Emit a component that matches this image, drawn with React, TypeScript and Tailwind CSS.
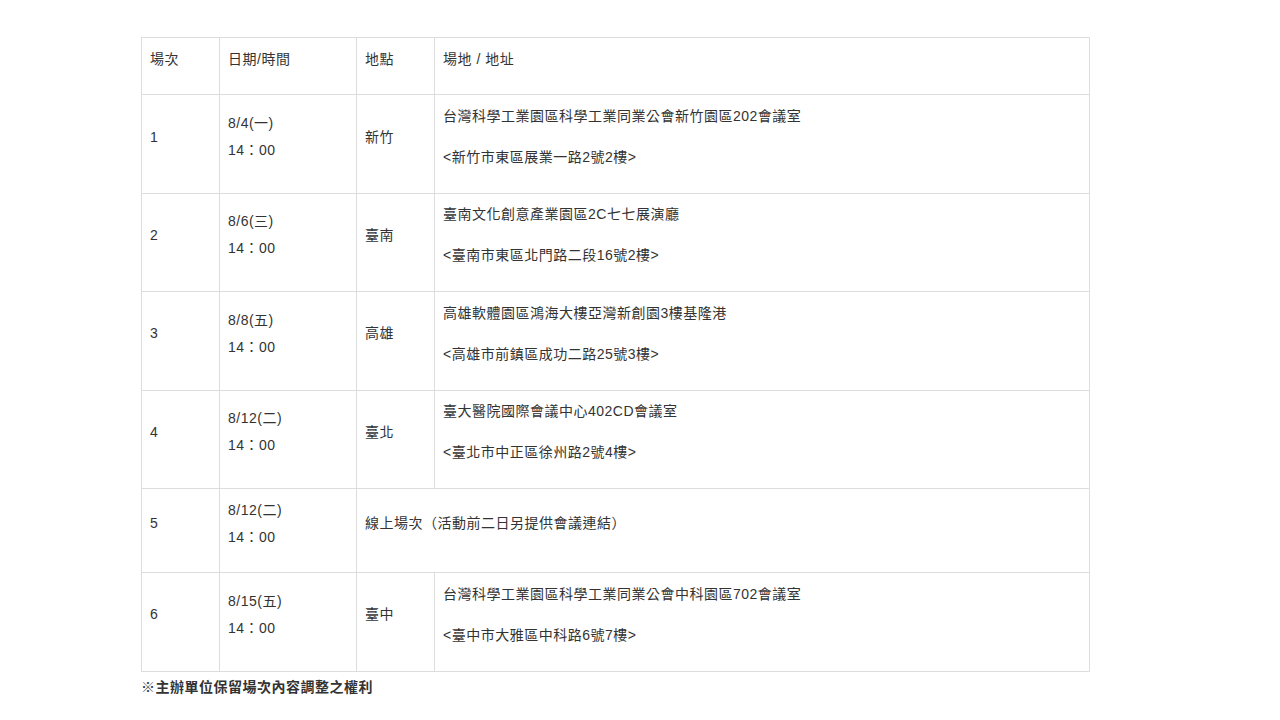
const rows = [
  { no: '1', date: '8/4(一)', place: '新竹', venue: '台灣科學工業園區科學工業同業公會新竹園區202會議室', addr: '<新竹市東區展業一路2號2樓>' },
  { no: '2', date: '8/6(三)', place: '臺南', venue: '臺南文化創意產業園區2C七七展演廳', addr: '<臺南市東區北門路二段16號2樓>' },
  { no: '3', date: '8/8(五)', place: '高雄', venue: '高雄軟體園區鴻海大樓亞灣新創園3樓基隆港', addr: '<高雄市前鎮區成功二路25號3樓>' },
  { no: '4', date: '8/12(二)', place: '臺北', venue: '臺大醫院國際會議中心402CD會議室', addr: '<臺北市中正區徐州路2號4樓>' },
  { no: '5', date: '8/12(二)', online: '線上場次（活動前二日另提供會議連結）' },
  { no: '6', date: '8/15(五)', place: '臺中', venue: '台灣科學工業園區科學工業同業公會中科園區702會議室', addr: '<臺中市大雅區中科路6號7樓>' },
]

const cell = 'border border-[#dddddd] px-[8px] py-[7.7px] align-middle'

export default function App() {
  return (
    <div
      className="w-[1280px] h-[720px] bg-white pt-[37px] pl-[141px] text-[14px] leading-[27px] tracking-[0.5px] text-[#333333]"
      style={{ fontFamily: '"Liberation Sans", "Noto Sans CJK TC", sans-serif' }}
    >
      <table className="w-[949px] border-collapse table-fixed">
        <colgroup>
          <col className="w-[78px]" />
          <col className="w-[137px]" />
          <col className="w-[78px]" />
          <col />
        </colgroup>
        <thead>
          <tr>
            <th className={cell + ' text-left font-normal'}><p className="mb-[14px]">場次</p></th>
            <th className={cell + ' text-left font-normal'}><p className="mb-[14px]">日期/時間</p></th>
            <th className={cell + ' text-left font-normal'}><p className="mb-[14px]">地點</p></th>
            <th className={cell + ' text-left font-normal'}><p className="mb-[14px]">場地 / 地址</p></th>
          </tr>
        </thead>
        <tbody>
          {rows.map((r) => (
            <tr key={r.no}>
              <td className={cell}><p className="mb-[14px]">{r.no}</p></td>
              <td className={cell}>
                <p className="mb-[14px]">{r.date}<br />14：00</p>
              </td>
              {r.online ? (
                <td className={cell} colSpan={2}><p className="mb-[14px]">{r.online}</p></td>
              ) : (
                <>
                  <td className={cell}><p className="mb-[14px]">{r.place}</p></td>
                  <td className={cell}>
                    <p className="mb-[14px]">{r.venue}</p>
                    <p className="mb-[14px]">{r.addr}</p>
                  </td>
                </>
              )}
            </tr>
          ))}
        </tbody>
      </table>
      <p className="mt-[2px] font-bold leading-[27px]">※主辦單位保留場次內容調整之權利</p>
    </div>
  )
}
